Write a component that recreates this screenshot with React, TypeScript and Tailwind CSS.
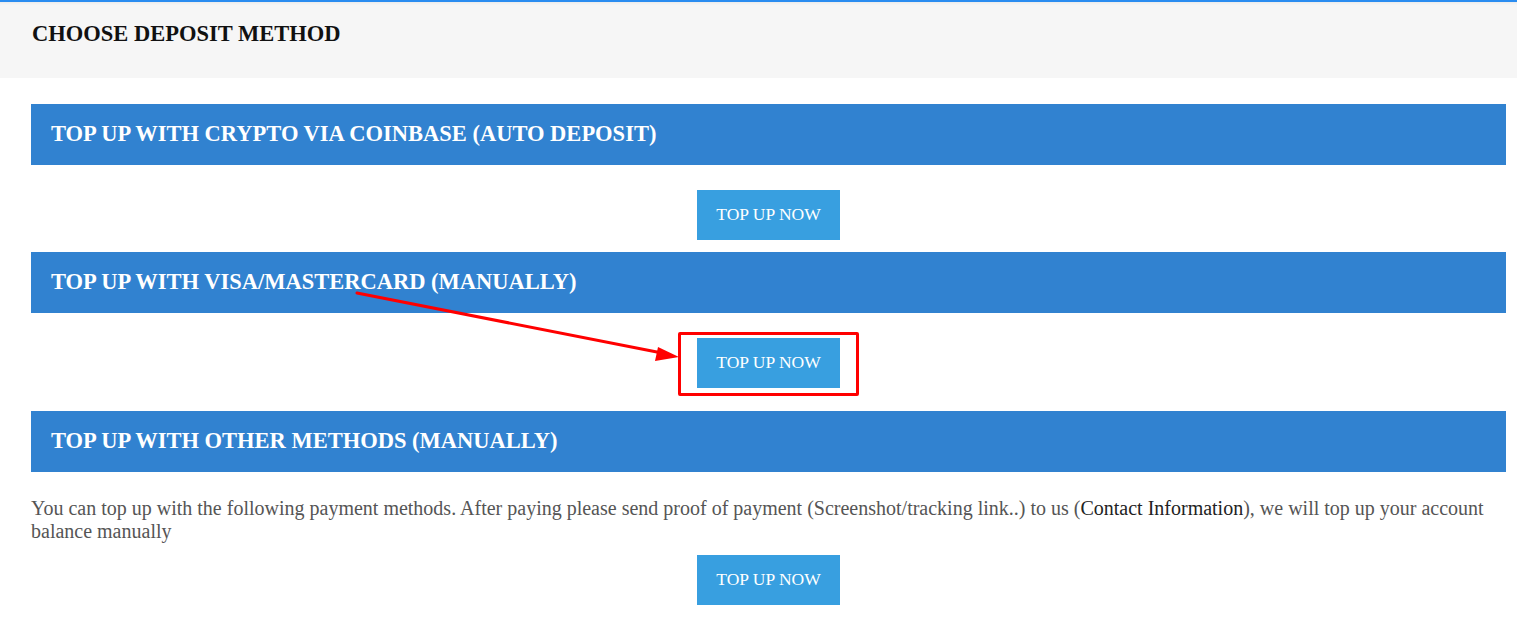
import React from "react";

const SECTIONS = [
  { key: "crypto", title: "TOP UP WITH CRYPTO VIA COINBASE (AUTO DEPOSIT)" },
  { key: "card", title: "TOP UP WITH VISA/MASTERCARD (MANUALLY)" },
];

function SectionBar({ title }: { title: string }) {
  return (
    <div className="h-[61px] bg-[#3182d0] flex items-center px-5">
      <h2 className="text-[22.5px] font-bold text-white leading-none">{title}</h2>
    </div>
  );
}

function TopUpButton({ highlight = false }: { highlight?: boolean }) {
  return (
    <div className="flex justify-center">
      <div className="relative">
        <button className="h-[50px] w-[143px] bg-[#389fe0] text-white text-[17.5px] leading-none">
          TOP UP NOW
        </button>
        {highlight && (
          <div className="absolute -left-[19px] -top-[6px] w-[181px] h-[64px] border-[3px] border-[#ff0000] rounded-[2px]" />
        )}
      </div>
    </div>
  );
}

export default function App() {
  return (
    <div className="relative min-h-[620px] bg-white font-['Liberation_Serif',serif] border-t-2 border-[#2a8cf0]">
      {/* Page Header */}
      <div className="h-[76px] bg-[#f6f6f6] px-8 pt-[19px] shadow-[inset_0_3px_3px_-2px_rgba(0,0,0,0.06)]">
        <h1 className="text-[22.5px] font-bold text-[#111] leading-[26px]">
          CHOOSE DEPOSIT METHOD
        </h1>
      </div>

      <div className="pl-[31px] pr-[11px] pt-[26px]">
        <SectionBar title={SECTIONS[0].title} />
        <div className="pt-[25px] pb-[12px]">
          <TopUpButton />
        </div>
        <SectionBar title={SECTIONS[1].title} />
        <div className="pt-[25px] pb-[23px]">
          <TopUpButton highlight />
        </div>
        <SectionBar title="TOP UP WITH OTHER METHODS (MANUALLY)" />
        <p className="mt-[25px] text-[20px] leading-[23px] text-[#555]">
          You can top up with the following payment methods. After paying please send proof of payment
          (Screenshot/tracking link..) to us (<span className="text-[#222]">Contact Information</span>), we will
          top up your account balance manually
        </p>
        <div className="pt-[12px]">
          <TopUpButton />
        </div>
      </div>

      {/* Annotation arrow */}
      <svg className="absolute left-0 top-0 pointer-events-none" width="1517" height="620">
        <line x1="357" y1="291" x2="662" y2="351" stroke="#ff0000" strokeWidth="3" strokeLinecap="round" />
        <polygon points="679,355 658,345 655,359" fill="#ff0000" />
      </svg>
    </div>
  );
}
